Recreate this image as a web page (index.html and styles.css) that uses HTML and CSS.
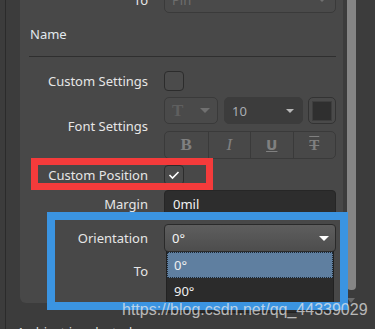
FILE: index.html
```html
<!DOCTYPE html>
<html lang="en">
<head>
  <meta charset="UTF-8" />
  <title>Properties</title>
  <link rel="stylesheet" href="styles.css">
</head>
<body>
  <div class="frame">
    <div class="upper">
      <div class="panel">
        <div class="row row-top">
          <span class="label">To</span>
          <div class="select select-disabled">
            <span>Pin</span>
            <span class="caret caret-dim"></span>
          </div>
        </div>

        <div class="name">Name</div>
        <div class="divider"></div>

        <div class="row row-settings">
          <span class="label">Custom Settings</span>
          <span class="check"></span>
        </div>

        <div class="row row-font">
          <span class="label">Font Settings</span>
          <div class="font-tools">
            <div class="font-line">
              <div class="select select-type">
                <span class="glyph">T</span>
                <span class="caret caret-dim"></span>
              </div>
              <div class="select select-size">
                <span>10</span>
                <span class="caret caret-grey"></span>
              </div>
              <div class="swatch"><span></span></div>
            </div>
            <div class="styles">
              <span class="glyph">B</span>
              <span class="glyph glyph-i">I</span>
              <span class="glyph glyph-u">U</span>
              <span class="glyph glyph-s">T</span>
            </div>
          </div>
        </div>

        <div class="row row-position">
          <span class="label">Custom Position</span>
          <span class="check">
            <svg width="12" height="10" viewBox="0 0 12 10"><polyline points="1.5,5 4.5,8 10.5,2" fill="none" stroke="#fff" stroke-width="1.6"/></svg>
          </span>
        </div>

        <div class="row row-margin">
          <span class="label">Margin</span>
          <div class="input">0mil</div>
        </div>

        <div class="row row-orient">
          <span class="label">Orientation</span>
          <div class="select select-open">
            <span>0°</span>
            <span class="caret"></span>
            <ul class="options">
              <li class="active">0°</li>
              <li>90°</li>
            </ul>
          </div>
        </div>

        <div class="row row-to">
          <span class="label">To</span>
          <div></div>
        </div>
      </div>

      <div class="scrollbar">
        <div class="thumb"></div>
        <span class="caret caret-scroll"></span>
      </div>
    </div>
    <div class="status">1 object is selected</div>
  </div>

  <div class="mark mark-red"></div>
  <div class="mark mark-blue"></div>
  <div class="watermark">https://blog.csdn.net/qq_44339029</div>
</body>
</html>
```

FILE: styles.css
```css
body {
  margin: 0;
  width: 375px;
  height: 329px;
  overflow: hidden;
  position: relative;
  background: #3c3c3c;
  font-family: 'Noto Sans', sans-serif;
  font-size: 13px;
  color: #e6e6e6;
}

.frame {
  margin-left: 5px;
  height: 329px;
  border-left: 1px solid #2b2b2b;
  display: flex;
  flex-direction: column;
}

.upper {
  display: flex;
  padding-left: 14px;
}

.panel {
  width: 323px;
  margin-top: -14px;
  padding-bottom: 19px;
  background: #484848;
  border-radius: 0 0 6px 6px;
}

.row {
  display: grid;
  grid-template-columns: 128px 172px;
  column-gap: 16px;
  align-items: center;
  height: 27px;
}

.label {
  text-align: right;
  white-space: nowrap;
}

.name {
  margin-top: 8px;
  padding-left: 10px;
  line-height: 27px;
  color: #e2e8ee;
}

.divider {
  margin: 8px 7px 0 9px;
  border-top: 1px solid #2f2f2f;
}

.row-settings { margin-top: 10px; }
.row-font { margin-top: 3px; height: 62px; }
.row-font .label { padding-bottom: 4px; }
.row-position { margin-top: 2px; }
.row-margin { margin-top: 2px; }
.row-orient { margin-top: 7px; height: 28px; }
.row-to { margin-top: 5px; }

.select {
  position: relative;
  height: 100%;
  box-sizing: border-box;
  display: flex;
  align-items: center;
  justify-content: space-between;
  padding: 0 8px 0 7px;
  border: 1px solid #3a3a3a;
  border-radius: 5px;
  background: #4a4a4a;
}

.select-disabled {
  color: #6e6e6e;
}

.caret {
  width: 0;
  height: 0;
  border-left: 5px solid transparent;
  border-right: 5px solid transparent;
  border-top: 5px solid #fff;
}

.caret-dim { border-top-color: #707070; }
.caret-grey { border-left-width: 4px; border-right-width: 4px; border-top: 4px solid #b8b8b8; }

.check {
  width: 20px;
  height: 20px;
  box-sizing: border-box;
  border: 1px solid #2c2c2c;
  border-radius: 4px;
  background: #4b4b4b;
  display: flex;
  align-items: center;
  justify-content: center;
}

.font-tools {
  display: flex;
  flex-direction: column;
  gap: 7px;
}

.font-line {
  display: flex;
  height: 27px;
}

.select-type {
  width: 54px;
  margin-right: 6px;
  padding-right: 7px;
}

.select-size {
  width: 79px;
  margin-right: 5px;
  border-color: #3c3c3c;
  background: #3c3c3c;
  color: #a9adb2;
  padding-right: 8px;
}

.swatch {
  width: 28px;
  box-sizing: border-box;
  border: 1px solid #333;
  border-radius: 5px;
  background: #4a4a4a;
  display: flex;
  align-items: center;
  justify-content: center;
}

.swatch span {
  width: 20px;
  height: 20px;
  box-sizing: border-box;
  border: 1px solid #3e3e3e;
  background: #2f2f2f;
}

.glyph {
  font-family: 'Liberation Serif', serif;
  font-weight: bold;
  font-size: 17px;
  color: #5f5f5f;
}

.styles {
  display: grid;
  grid-template-columns: repeat(4, 1fr);
  height: 28px;
  box-sizing: border-box;
  border: 1px solid #3a3a3a;
  border-radius: 5px;
}

.styles .glyph {
  display: flex;
  align-items: center;
  justify-content: center;
  color: #808080;
  border-left: 1px solid #3a3a3a;
}

.styles .glyph:first-child { border-left: none; }

.glyph-i { font-style: italic; font-weight: normal; }
.glyph-u { text-decoration: underline; font-family: 'DejaVu Sans', sans-serif; font-size: 14px; }
.glyph-s { text-decoration: overline line-through; font-size: 15px; }

.input {
  height: 100%;
  box-sizing: border-box;
  display: flex;
  align-items: center;
  padding-left: 8px;
  border: 1px solid #262626;
  border-radius: 4px;
  background: #2d2d2d;
  color: #f2f2f2;
}

.select-open {
  border-color: #2a2a2a;
  border-radius: 4px;
  background: linear-gradient(#5e5e5e, #4d4d4d);
  color: #f4f4f4;
  padding-right: 6px;
}

.select-open .caret {
  border-left-width: 5.5px;
  border-right-width: 5.5px;
}

.options {
  position: absolute;
  top: 100%;
  left: 1px;
  right: 1px;
  margin: 0;
  padding: 1px 0 0;
  list-style: none;
  background: #2b2b2b;
  border: 1px solid #222;
  border-top: none;
  height: 60px;
}

.options li {
  height: 26px;
  line-height: 26px;
  padding-left: 7px;
  color: #f0f0f0;
}

.options li.active {
  background: #5f7fa0;
  outline: 1px dotted #1d2833;
  outline-offset: -1px;
}

.scrollbar {
  width: 32px;
  display: flex;
  flex-direction: column;
  align-items: flex-start;
  padding-left: 4px;
  box-sizing: border-box;
}

.thumb {
  width: 9px;
  height: 290px;
  background: #858585;
  border-radius: 0 0 4px 4px;
}

.caret-scroll {
  margin: 8px 0 0 0;
  border-left-width: 4px;
  border-right-width: 4px;
  border-top: 5px solid #6a6a6a;
}

.status {
  margin-top: 20px;
  padding-left: 11px;
  color: #dedede;
}

.mark {
  position: absolute;
  box-sizing: border-box;
}

.mark-red {
  left: 31px;
  top: 158px;
  width: 182px;
  height: 32px;
  border: 7px solid #f43b3b;
}

.mark-blue {
  left: 47px;
  top: 212px;
  width: 301px;
  height: 98px;
  border: 8px solid #3b94e1;
}

.watermark {
  position: absolute;
  left: 122px;
  top: 302px;
  font-family: 'Liberation Sans', sans-serif;
  font-size: 16px;
  line-height: 16px;
  color: rgba(235, 235, 235, 0.72);
}
```
